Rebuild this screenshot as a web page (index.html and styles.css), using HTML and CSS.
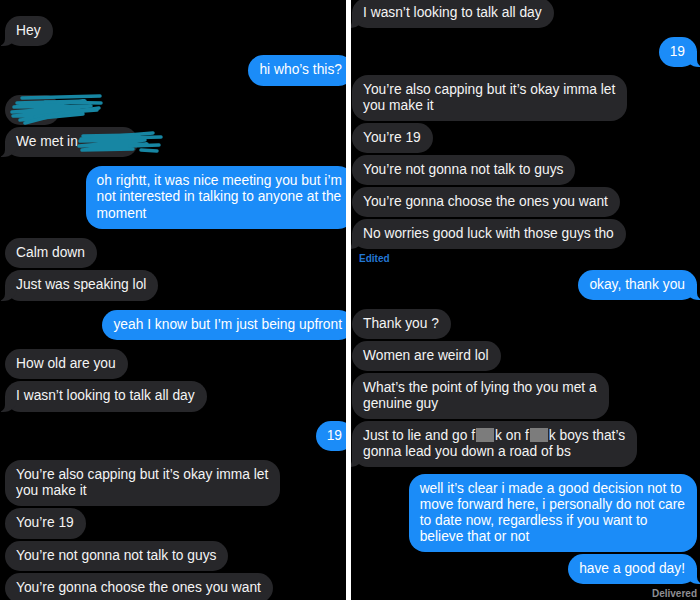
FILE: index.html
```html
<!DOCTYPE html>
<html lang="en">
<head>
  <meta charset="UTF-8">
  <title>Messages</title>
  <link rel="stylesheet" href="styles.css">
</head>
<body>
  <div class="screen">
    <div class="panel panel-left">
      <div class="msg them tail">Hey</div>
      <div class="msg me tail gap">hi who’s this?</div>
      <div class="msg them gap redact-wrap">
        <span class="blank"></span>
        <svg class="scribble scribble-one" width="100" height="34" viewBox="0 0 100 34">
          <path d="M17 5 L95 3" />
          <path d="M12 10 L80 8 L9 14 L86 13 L7 19 L92 17 L8 23 L78 21 L15 27" />
          <path d="M30 24 L94 15" />
          <path d="M20 30 L58 20" />
          <path d="M40 9 L96 10" />
        </svg>
      </div>
      <div class="msg them tail redact-wrap">We met in<span class="hidden-word"></span>
        <svg class="scribble scribble-two" width="95" height="28" viewBox="0 0 95 28">
          <path d="M6 10 L78 4" />
          <path d="M8 7 L64 6 L5 12 L70 11 L4 17 L72 15 L7 21 L58 20" />
          <path d="M45 9 L86 8" />
          <path d="M55 17 L84 16" />
          <path d="M66 21 L82 22" />
        </svg>
      </div>
      <div class="msg me gap">oh rightt, it was nice meeting you but i’m<br>not interested in talking to anyone at the<br>moment</div>
      <div class="msg them gap">Calm down</div>
      <div class="msg them tail">Just was speaking lol</div>
      <div class="msg me tail gap">yeah I know but I’m just being upfront</div>
      <div class="msg them gap">How old are you</div>
      <div class="msg them tail">I wasn’t looking to talk all day</div>
      <div class="msg me tail gap">19</div>
      <div class="msg them gap">You’re also capping but it’s okay imma let<br>you make it</div>
      <div class="msg them">You’re 19</div>
      <div class="msg them">You’re not gonna not talk to guys</div>
      <div class="msg them">You’re gonna choose the ones you want</div>
    </div>

    <div class="divider"></div>

    <div class="panel panel-right">
      <div class="msg them tail first">I wasn’t looking to talk all day</div>
      <div class="msg me tail gap">19</div>
      <div class="msg them gap-sm">You’re also capping but it’s okay imma let<br>you make it</div>
      <div class="msg them">You’re 19</div>
      <div class="msg them">You’re not gonna not talk to guys</div>
      <div class="msg them">You’re gonna choose the ones you want</div>
      <div class="msg them tail">No worries good luck with those guys tho</div>
      <div class="edited">Edited</div>
      <div class="msg me tail after-edited">okay, thank you</div>
      <div class="msg them gap">Thank you ?</div>
      <div class="msg them">Women are weird lol</div>
      <div class="msg them">What’s the point of lying tho you met a<br>genuine guy</div>
      <div class="msg them tail">Just to lie and go f<span class="censor"></span>k on f<span class="censor"></span>k boys that’s<br>gonna lead you down a road of bs</div>
      <div class="msg me gap-xs">well it’s clear i made a good decision not to<br>move forward here, i personally do not care<br>to date now, regardless if you want to<br>believe that or not</div>
      <div class="msg me tail">have a good day!</div>
      <div class="delivered">Delivered</div>
    </div>
  </div>
</body>
</html>
```

FILE: styles.css
```css
body {
  margin: 0;
  background: #fff;
  font-family: 'Liberation Sans', Arial, sans-serif;
}
.screen {
  display: flex;
  width: 700px;
  height: 600px;
  overflow: hidden;
}
.panel {
  background: #000;
  overflow: hidden;
  display: flex;
  flex-direction: column;
  align-items: flex-start;
  box-sizing: border-box;
}
.panel-left {
  width: 346px;
  padding: 14px 0 0 5px;
}
.divider {
  width: 5px;
  background: #fff;
}
.panel-right {
  width: 349px;
  padding: 0 3px 0 1px;
}

.msg {
  position: relative;
  z-index: 0;
  margin-top: 2px;
  padding: 7px 12px 7px 11px;
  font-size: 13.8px;
  line-height: 16.3px;
  color: #f4f4f4;
  border-radius: 16px;
  white-space: nowrap;
}
.panel-right .msg {
  line-height: 16px;
}
.them {
  background: #27272a;
  align-self: flex-start;
}
.me {
  background: #1b8cf8;
  color: #fff;
  align-self: flex-end;
}
.panel-left .me {
  margin-right: -8px;
}
.gap {
  margin-top: 9px;
}
.gap-sm {
  margin-top: 8px;
}
.gap-xs {
  margin-top: 7px;
}
.first {
  margin-top: -2px;
}

/* bubble tails */
.tail::before,
.tail::after {
  content: "";
  position: absolute;
  bottom: 0;
  height: 16px;
  z-index: -1;
}
.them.tail::before {
  left: -4px;
  width: 16px;
  background: #27272a;
  border-bottom-right-radius: 14px 12px;
}
.them.tail::after {
  left: -20px;
  width: 20px;
  background: #000;
  border-bottom-right-radius: 7px;
}
.me.tail::before {
  right: -4px;
  width: 16px;
  background: #1b8cf8;
  border-bottom-left-radius: 14px 12px;
}
.me.tail::after {
  right: -20px;
  width: 20px;
  background: #000;
  border-bottom-left-radius: 7px;
}

/* redactions */
.blank {
  display: inline-block;
  width: 32px;
  height: 16px;
  vertical-align: top;
}
.hidden-word {
  display: inline-block;
  width: 48px;
  height: 16px;
  vertical-align: top;
}
.scribble {
  position: absolute;
  overflow: visible;
  fill: none;
  stroke: #1786a3;
  stroke-linecap: round;
  stroke-linejoin: round;
}
.scribble path {
  stroke-width: 3.5;
}
.scribble-one {
  left: 0;
  top: -2px;
}
.scribble-two {
  left: 70px;
  top: 2px;
}
.censor {
  display: inline-block;
  width: 18px;
  height: 14px;
  margin: 0 1px;
  background: #7c7c7c;
  vertical-align: -2px;
}

.edited {
  margin: 4px 0 0 7px;
  font-size: 10px;
  line-height: 12px;
  font-weight: bold;
  color: #2377d4;
}
.after-edited {
  margin-top: 5px;
}
.delivered {
  align-self: flex-end;
  margin-top: 4px;
  font-size: 10px;
  line-height: 12px;
  font-weight: bold;
  color: #8e8e93;
}
```
